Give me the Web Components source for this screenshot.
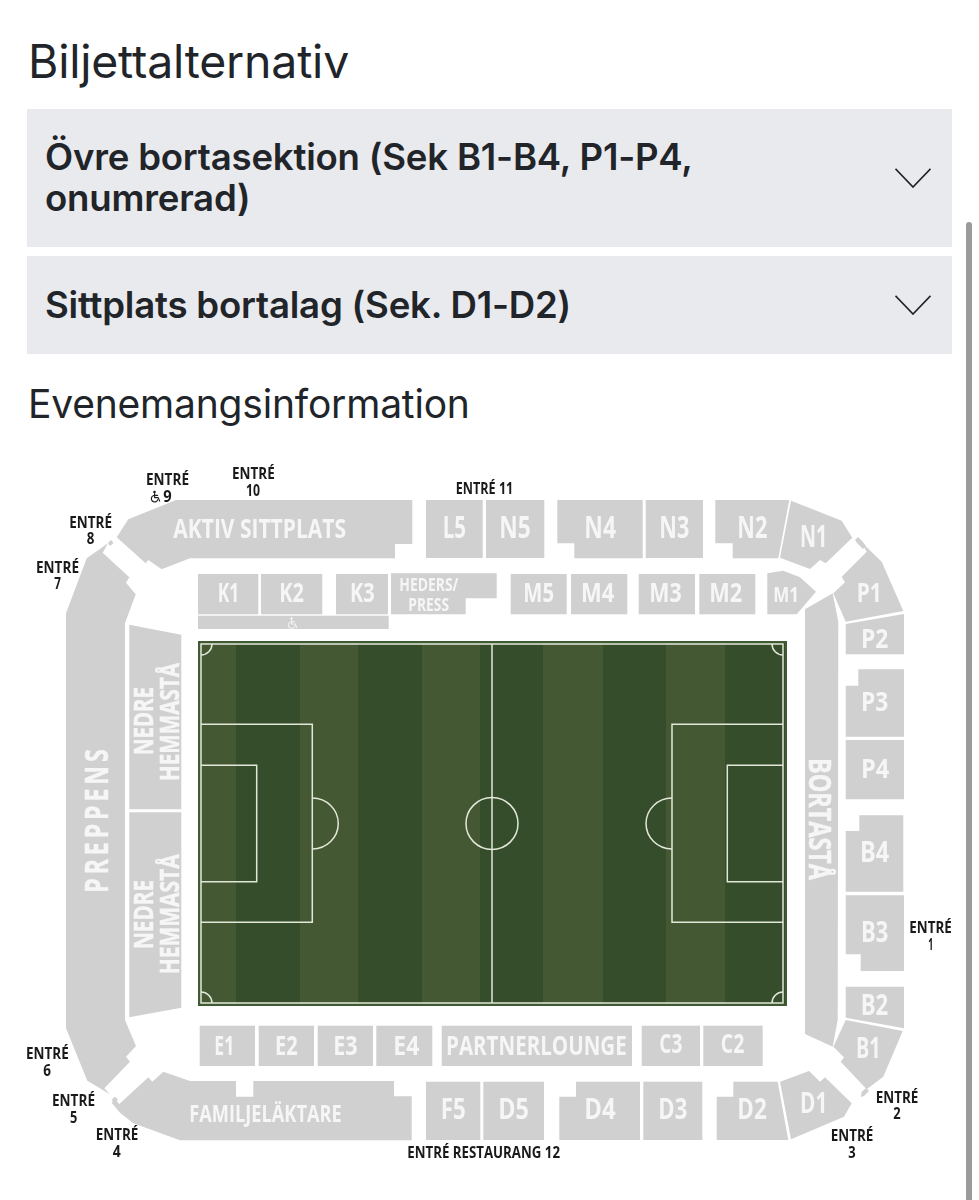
<!DOCTYPE html>
<html lang="sv">
<head>
<meta charset="utf-8">
<title>Biljettalternativ</title>
<style>
html,body{margin:0;padding:0;background:#fff;overflow:hidden;height:1200px}
</style>
</head>
<body>
<ticket-view>
  <page-heading size="46.4" line="48" top="37" bottom="24">Biljettalternativ</page-heading>
  <accordion-row>Övre bortasektion (Sek B1-B4, P1-P4, onumrerad)</accordion-row>
  <accordion-row>Sittplats bortalag (Sek. D1-D2)</accordion-row>
  <page-heading size="39" line="44" top="19" bottom="14">Evenemangsinformation</page-heading>
  <stadium-map></stadium-map>
</ticket-view>
<script>
class TicketView extends HTMLElement{
  constructor(){super();const s=this.attachShadow({mode:'open'});
  s.innerHTML=`<style>
  :host{display:block;position:relative;width:979px;height:1200px;box-sizing:border-box;padding:0 27px;overflow:hidden;font-family:Inter,"Liberation Sans",sans-serif;color:#212529;background:#fff}
  .bar{position:absolute;left:966px;top:222px;bottom:0;width:6px;background:#9b9b9b;border-radius:3px 3px 0 0}
  </style><slot></slot><div class="bar"></div>`;}
}
class PageHeading extends HTMLElement{
  constructor(){super();const s=this.attachShadow({mode:'open'});
  const g=n=>this.getAttribute(n);
  s.innerHTML=`<style>
  :host{display:block;font-size:${g('size')}px;line-height:${g('line')}px;padding-top:${g('top')}px;padding-bottom:${g('bottom')}px;font-weight:400;letter-spacing:-.2px;color:#212529;padding-left:1px}
  </style><slot></slot>`;}
}
class AccordionRow extends HTMLElement{
  constructor(){super();const s=this.attachShadow({mode:'open'});
  s.innerHTML=`<style>
  :host{display:flex;box-sizing:border-box;min-height:98px;align-items:center;justify-content:space-between;gap:40px;background:#e9eaee;padding:28px 21px 28px 18px;margin-bottom:9px;font-size:36.6px;line-height:41px;font-weight:600;color:#212529;letter-spacing:-.2px}
  .t{flex:1;max-width:720px}
  svg{flex:none;display:block}
  </style><div class="t"><slot></slot></div>
  <svg width="36" height="20" viewBox="0 0 36 20" fill="none" stroke="#212529" stroke-width="1.7"><path d="M0.5 0.8 18 19 35.5 0.8"/></svg>`;}
}
const GRAY='#d0d0d0';
const polys=[
 '176,500 412.3,500 412.3,544 395,544 395,558.3 190,558.3 161.7,569.3 148.3,560 145.7,563.3 116.7,537.3 128.3,519.3',
 '66,613.3 86.7,558.3 108,543.3 102.7,552.7 129.3,577.3 126,582.7 135.7,594.3 125,623.3 125,1020 136,1046 126,1056.7 130,1061.7 104.3,1088.3 110,1094.3 87.3,1080.7 66,1028.3',
 '119.3,1104 148.3,1077.3 152.3,1081.7 163.3,1071.7 190,1081 236,1081 236,1096.7 253.3,1096.7 253.3,1081 394,1081 394,1096.3 411.7,1096.3 411.7,1140.3 180,1140.3 133.3,1123.3 120,1112.7 111.7,1102.7 115,1099.3',
 '129.3,624.7 181.3,634.7 181.3,809.3 129.3,809.3',
 '129.3,812.3 181.3,812.3 181.3,1007.7 129.3,1017.3',
 '805,609.3 832.7,593.3 838.3,621.7 837.7,1020 832.7,1046.7 805,1034',
 '767.3,573.3 783.3,570.7 800,577.3 816,591.7 796.7,614.3 767.3,614.3',
 '791,500.7 841.7,520.7 852.3,537.7 825.7,563.3 820,560 810,569 780,557.7',
 '861,541.7 881.7,561.7 903.3,611 845.7,621.7 833.3,593.3 845,582.3 841.7,576.7 866.7,551.7',
 '904,614 904,654.3 845.7,654.3 845.7,624',
 '858.3,669.3 904,669.3 904,736.7 845.7,736.7 845.7,685.7 858.3,685.7',
 '845.7,740 904,740 904,799.3 845.7,799.3',
 '859.3,815.3 903.3,815.3 903.3,891.7 845.7,891.7 845.7,831 859.3,831',
 '845.7,895.3 904,895.3 904,971 860.7,971 860.7,954.3 845.7,954.3',
 '845.7,986.7 904,986.7 904,1028.3 845.7,1017.7',
 '845.7,1020 902.7,1031 883.3,1076.7 866.7,1089.3 840.7,1061.7 844,1057.3 833.3,1046.7',
 '780,1081.7 809,1071 820,1081.7 825,1077.3 851.7,1103.3 844,1116.7 791,1139.3',
 '733.3,1081.7 777.7,1081.7 788.3,1140 716.7,1140 716.7,1096.7 733.3,1096.7',
 '576,1081.7 640,1081.7 640,1140 559.3,1140 559.3,1096.7 576,1096.7',
 '557.3,500 642.7,500 642.7,558.3 574.3,558.3 574.3,543.3 557.3,543.3',
 '715.3,500 789.3,500 778.3,558.3 732.7,558.3 732.7,543.3 715.3,543.3',
 '391,573.3 496.7,573.3 496.7,598.3 465.7,598.3 465.7,614.3 391,614.3',
 '858,537 862,541 866,546 863,549 857,543 855,540',
 '108,543 111,540 113.5,543 110,546',
 '111.5,1100 115,1096.5 118,1100 114.5,1103',
 '861,1097 861.5,1092 866,1088 869,1091 864,1096'
];
const rects=[
 [643.3,1081.7,59,58.3],[483.3,1081.7,60.7,58.3],[426,1081.7,54.3,58.3],
 [703.3,1025.7,59.4,40.3],[641.7,1025.7,58.3,40.3],[441.7,1025.7,190.3,40.3],
 [199.7,1025.7,55.3,40.3],[258.7,1025.7,55.3,40.3],[317.7,1025.7,55.3,40.3],[376.3,1025.7,56,40.3],
 [426,500,56.7,58],[486,500,58.3,58],[645.7,500,57.3,58],
 [510.7,574,56,40.3],[571,574,56.3,40.3],[638.7,574,56.3,40.3],[699.3,574,56,40.3],
 [198,574,60.3,40.3],[261,574,61.3,40.3],[336,574,52,40.3],
 [198,615.7,190.7,13.3]
];
const white=[
 ['AKTIV SITTPLATS',173.3,346,537.7,26],['L5',442.7,466,537.5,30],['N5',499.3,530.7,537.5,30],['N4',584.3,616,537.5,30],['N3',659.3,689.3,537.5,30],['N2',737.3,767.3,537.5,30],['N1',800,827.3,546.7,30],
 ['K1',217.7,239.3,601.7,26],['K2',279.3,304,601.7,26],['K3',350,374.7,601.7,26],
 ['HEDERS/',399.3,458.3,590.7,17],['PRESS',408.3,449,611,17],
 ['M5',523.3,554,601.7,26],['M4',581,614.3,601.7,26],['M3',649.3,681.7,601.7,26],['M2',709.3,742.3,601.7,26],['M1',773.3,799,602.3,21],
 ['P1',856.7,881.7,601.7,27],['P2',861,888.3,648.3,27],['P3',861,888.3,710.7,27],['P4',861,889.3,778.3,27],
 ['B4',860,889.3,861.7,28],['B3',861,888.3,941.7,28],['B2',860.7,888.3,1015,28],['B1',856,880.7,1058.3,28],
 ['D1',800,827.3,1113.3,28],['D2',737.3,766.7,1119.3,28],['D3',658.3,687.3,1119.3,28],['D4',584.3,615.7,1119.3,28],['D5',498.3,529,1119.3,28],['F5',440.7,465.7,1119.3,28],
 ['C2',720.7,744.3,1053.3,26],['C3',659.3,682.3,1053.3,26],['PARTNERLOUNGE',446,626.7,1055,26.5],
 ['E1',214.3,234.3,1055,26],['E2',275,297.7,1055,26],['E3',333.3,357.7,1055,26],['E4',393.3,419.3,1055,26],
 ['FAMILJELÄKTARE',189.3,341.7,1122.3,23]
];
const turned=[
 ['NEDRE',153.3,755,68,27,-90,1,'spacingAndGlyphs'],['HEMMASTÅ',179,781,118,27,-90,1,'spacingAndGlyphs'],
 ['NEDRE',153.3,949,69,27,-90,1,'spacingAndGlyphs'],['HEMMASTÅ',179,974.3,120,27,-90,1,'spacingAndGlyphs'],
 ['PREPPENS',108.3,892.7,143.4,32,-90,.72,'spacing'],
 ['BORTASTÅ',809.3,758,122,31,90,1,'spacingAndGlyphs']
];
const black=[
 ['ENTRÉ',146,189,485],['9',163.3,171.7,501.7],['ENTRÉ',232,274.7,479.3],['10',246,260,495.7],
 ['ENTRÉ 11',455.7,513.3,494.3],
 ['ENTRÉ',69.3,112,527.7],['8',86.7,94.3,544.3],['ENTRÉ',36,79,573.3],['7',54.3,61,589.3],
 ['ENTRÉ',26,68.7,1059],['6',43.3,51,1076.3],['ENTRÉ',52,95,1106],['5',70,77.3,1122.7],['ENTRÉ',95.7,138.3,1140],['4',112.7,120.7,1156.7],
 ['ENTRÉ RESTAURANG 12',407.3,560,1158.3],
 ['ENTRÉ',830.7,873.3,1141],['3',848.3,855.7,1158.3],['ENTRÉ',875.7,918.3,1103.3],['2',893.3,900.7,1119.3],['ENTRÉ',909.3,951.7,933.3],['1',928.3,933.3,950]
];
const stripes=[[198,236,1],[236,300,0],[300,358,1],[358,422,0],[422,480,1],[480,543,0],[543,603,1],[603,666,0],[666,725,1],[725,787,0]];
const wheel=(x,y,s,c,w)=>`<g transform="translate(${x} ${y}) scale(${s})" fill="none" stroke="${c}" stroke-width="${w}" stroke-linecap="round" stroke-linejoin="round"><circle cx="3.4" cy="1.2" r=".7" fill="${c}"/><path d="M3.5 2.6V6.6H7L8.4 10"/><path d="M3.5 4.4H6.4"/><path d="M2.6 4.6A3.2 3.2 0 1 0 6.6 8.6"/></g>`;
class StadiumMap extends HTMLElement{
  constructor(){super();const s=this.attachShadow({mode:'open'});
  const len=(x0,x1)=>(x1-x0).toFixed(1);
  let h='';
  h+=`<g fill="${GRAY}">`+polys.map(p=>`<polygon points="${p}"/>`).join('')+rects.map(r=>`<rect x="${r[0]}" y="${r[1]}" width="${r[2]}" height="${r[3]}"/>`).join('')+'</g>';
  h+=stripes.map(t=>`<rect x="${t[0]}" y="641" width="${t[1]-t[0]}" height="365" fill="${t[2]?'#445834':'#364d2b'}"/>`).join('');
  h+=`<rect x="199" y="642" width="587" height="363" fill="none" stroke="#3f5a35" stroke-width="2"/>`;
  h+=`<g fill="none" stroke="#e2e8d8" stroke-width="1.5">
   <rect x="201" y="644" width="582" height="359"/>
   <path d="M492 644V1003"/><circle cx="492" cy="823.5" r="26"/>
   <path d="M201 724.3H312.3V922.3H201M201 765.3H256.7V881.7H201"/>
   <path d="M783 724.3H672V922.3H783M783 765.3H727.3V881.7H783"/>
   <path d="M312.3 798A26 25.5 0 0 1 312.3 849M672 798A26 25.5 0 0 0 672 849"/>
   <path d="M212 644A11 11 0 0 1 201 655M772 644A11 11 0 0 0 783 655M201 992A11 11 0 0 1 212 1003M772 1003A11 11 0 0 1 783 992"/>
  </g>`;
  h+=`<g class="w">`+white.map(t=>`<text x="${t[1]}" y="${t[3]}" font-size="${t[4]}" textLength="${len(t[1],t[2])}" lengthAdjust="spacingAndGlyphs">${t[0]}</text>`).join('')+
   turned.map(t=>`<text class="heavy" transform="translate(${t[1]} ${t[2]}) rotate(${t[5]}) scale(${t[6]} 1)" font-size="${t[4]}" textLength="${(t[3]/t[6]).toFixed(1)}" lengthAdjust="${t[7]}">${t[0]}</text>`).join('')+'</g>';
  h+=`<g class="b">`+black.map(t=>`<text x="${t[1]}" y="${t[3]}" font-size="15.5" textLength="${len(t[1],t[2])}" lengthAdjust="spacingAndGlyphs">${t[0]}</text>`).join('')+'</g>';
  h+=wheel(151,490.8,1.03,'#1a1a1a',1.1);
  h+=wheel(288,617.2,1.03,'#f4f4f4',1);
  s.innerHTML=`<style>
  :host{display:block;margin:0 -27px;width:979px;height:760px}
  svg{display:block;filter:blur(.4px)}
  text{font-family:"Open Sans","Liberation Sans",sans-serif;font-weight:700}
  .w text{fill:#f6f6f6}
  .w text.heavy{stroke:#f6f6f6;stroke-width:.5px}
  .b text{fill:#1a1a1a}
  </style><svg xmlns="http://www.w3.org/2000/svg" width="979" height="760" viewBox="0 440 979 760">${h}</svg>`;}
}
customElements.define('ticket-view',TicketView);
customElements.define('page-heading',PageHeading);
customElements.define('accordion-row',AccordionRow);
customElements.define('stadium-map',StadiumMap);
</script>
</body>
</html>
